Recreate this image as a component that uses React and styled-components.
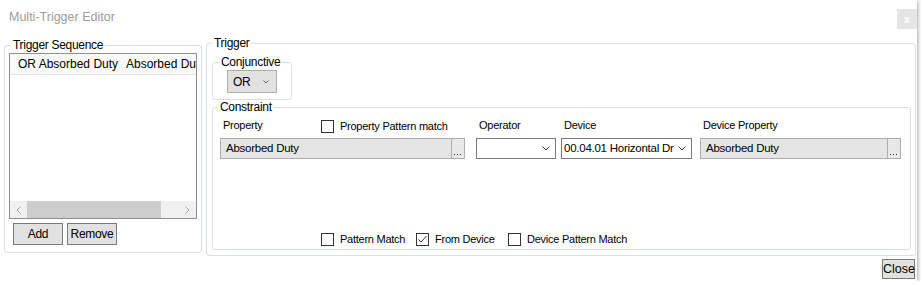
import React from 'react'
import styled, { createGlobalStyle } from 'styled-components'

const GlobalStyle = createGlobalStyle`
  body {
    margin: 0;
    background: #fff;
    font-family: "Liberation Sans", Arial, sans-serif;
    font-size: 11px;
    letter-spacing: -0.25px;
    color: #000;
  }
  * { box-sizing: border-box; }
`

const Window = styled.div`
  width: 917px;
  height: 281px;
  background: #fff;
  box-shadow: 1px 1px 4px rgba(0, 0, 0, 0.35);
  display: flex;
  flex-direction: column;
`

const TitleBar = styled.div`
  height: 36px;
  display: flex;
  justify-content: space-between;
  align-items: flex-start;
  padding-left: 9px;
`

const Title = styled.div`
  color: #9b9b9b;
  font-size: 12.5px;
  letter-spacing: 0;
  line-height: 20px;
  padding-top: 7px;
`

const CloseX = styled.div`
  width: 20px;
  height: 20px;
  margin-top: 9px;
  background: #e5e5e5;
  color: #fff;
  font-size: 11px;
  font-weight: bold;
  display: flex;
  align-items: center;
  justify-content: center;
`

const Body = styled.div`
  height: 220px;
  display: flex;
  align-items: flex-start;
  gap: 4px;
  padding-left: 4px;
`

const GroupBox = styled.fieldset`
  margin: ${p => p.$mt || 0}px 0 0 ${p => p.$ml || 0}px;
  padding: 0;
  border: 1px solid #d9dee3;
  border-radius: 3px;
  min-width: 0;
  width: ${p => p.$w}px;
  height: ${p => p.$h}px;
`

const Legend = styled.legend`
  padding: 0 2px;
  margin-left: ${p => p.$ml || 5}px;
  line-height: 14px;
  font-size: 12px;
  letter-spacing: -0.3px;
`

const ListView = styled.div`
  margin: 1px 0 0 4px;
  width: 188px;
  height: 166px;
  border: 1px solid #8e8f94;
  display: flex;
  flex-direction: column;
  background: #fff;
`

const ListHeader = styled.div`
  height: 21px;
  display: flex;
  align-items: center;
  background: #fafafa;
  border-bottom: 1px solid #e5e5e5;
  white-space: nowrap;
  overflow: hidden;
  font-size: 12px;
  letter-spacing: 0;
`

const HeaderCell = styled.div`
  flex: 0 0 ${p => p.$w}px;
  padding-left: ${p => p.$pl}px;
`

const ListRows = styled.div`
  flex: 1;
`

const HScroll = styled.div`
  height: 17px;
  display: flex;
  background: #f0f0f0;
`

const ScrollArrow = styled.div`
  flex: 0 0 17px;
  display: flex;
  align-items: center;
  justify-content: center;
`

const ScrollTrack = styled.div`
  flex: 1;
  display: flex;
`

const ScrollThumb = styled.div`
  width: 134px;
  background: #cdcdcd;
`

const ButtonRow = styled.div`
  display: flex;
  gap: 4px;
  margin: 4px 0 0 8px;
`

const Button = styled.button`
  width: ${p => p.$w || 50}px;
  height: ${p => p.$h || 22}px;
  padding: 0;
  background: #e1e1e1;
  border: 1px solid #7a7a7a;
  font-family: inherit;
  font-size: ${p => p.$fs || 12}px;
  letter-spacing: ${p => (p.$fs ? 0 : -0.3)}px;
  color: #000;
`

const ConjCombo = styled.div`
  margin: 1px 0 0 14px;
  width: 50px;
  height: 23px;
  background: #e1e1e1;
  border: 1px solid #adadad;
  display: flex;
  align-items: center;
  justify-content: space-between;
  padding: 0 7px 0 5px;
  font-size: 12px;
`

const ConstraintBody = styled.div`
  height: 135px;
  display: flex;
  flex-direction: column;
  padding-left: 7px;
`

const Columns = styled.div`
  display: flex;
`

const Column = styled.div`
  width: ${p => p.$w}px;
  margin-left: ${p => p.$ml || 0}px;
  display: flex;
  flex-direction: column;
`

const ColumnHead = styled.div`
  height: 24px;
  display: flex;
  align-items: flex-start;
  padding-top: 4px;
`

const FieldLabel = styled.div`
  line-height: 14px;
  padding-left: 3px;
  width: ${p => (p.$w ? `${p.$w}px` : 'auto')};
`

const CheckItem = styled.label`
  display: flex;
  align-items: center;
  gap: 6px;
  line-height: 14px;
  white-space: nowrap;
  width: ${p => (p.$w ? `${p.$w}px` : 'auto')};
  margin-top: ${p => p.$mt || 0}px;
`

const Box = styled.span`
  flex: 0 0 13px;
  height: 13px;
  border: 1px solid #333;
  background: #fff;
  display: flex;
  align-items: center;
  justify-content: center;
`

const PickField = styled.div`
  height: 21px;
  background: #e5e5e5;
  border: 1px solid #adadad;
  display: flex;
`

const PickText = styled.div`
  flex: 1;
  padding-left: 5px;
  line-height: 19px;
  white-space: nowrap;
  overflow: hidden;
  font-size: 11.5px;
`

const PickButton = styled.div`
  flex: 0 0 13px;
  border-left: 1px solid #adadad;
  background: #e8e8e8;
  display: flex;
  align-items: flex-end;
  justify-content: center;
  padding-bottom: 3px;
`

const Combo = styled.div`
  height: 21px;
  background: #fff;
  border: 1px solid #7a7a7a;
  display: flex;
  align-items: center;
  padding: 0 5px 0 2px;
`

const ComboText = styled.div`
  flex: 1;
  white-space: nowrap;
  overflow: hidden;
  line-height: 19px;
  margin-right: 4px;
  font-size: 11.5px;
`

const CheckRow = styled.div`
  margin: auto 0 3px 101px;
  display: flex;
`

const Footer = styled.div`
  display: flex;
  justify-content: flex-end;
  padding: 3px 2px 0 0;
`

const Chevron = ({ w = 8, h = 4, color = '#444' }) => (
  <svg width={w} height={h + 1} viewBox={`0 0 ${w} ${h + 1}`}>
    <polyline points={`0.5,0.5 ${w / 2},${h} ${w - 0.5},0.5`} fill="none" stroke={color} strokeWidth="1" />
  </svg>
)

const Dots = () => (
  <svg width="9" height="1" viewBox="0 0 9 1">
    <rect x="0" y="0" width="1" height="1" fill="#333" />
    <rect x="3" y="0" width="1" height="1" fill="#333" />
    <rect x="6" y="0" width="1" height="1" fill="#333" />
  </svg>
)

const SideArrow = ({ dir }) => (
  <svg width="5" height="8" viewBox="0 0 5 8">
    <polyline
      points={dir === 'left' ? '4.5,0.5 1,4 4.5,7.5' : '0.5,0.5 4,4 0.5,7.5'}
      fill="none"
      stroke="#a6a6a6"
      strokeWidth="1"
    />
  </svg>
)

const CheckBox = ({ checked, label, w, mt }) => (
  <CheckItem $w={w} $mt={mt}>
    <Box>
      {checked && (
        <svg width="11" height="11" viewBox="0 0 11 11">
          <polyline points="1.5,5.5 4,8 9.5,2" fill="none" stroke="#333" strokeWidth="1" />
        </svg>
      )}
    </Box>
    {label}
  </CheckItem>
)

export default function App() {
  return (
    <>
      <GlobalStyle />
      <Window>
        <TitleBar>
          <Title>Multi-Trigger Editor</Title>
          <CloseX>x</CloseX>
        </TitleBar>
        <Body>
          <GroupBox $w={198} $h={215} $mt={2}>
            <Legend $ml={6}>Trigger Sequence</Legend>
            <ListView>
              <ListHeader>
                <HeaderCell $w={116} $pl={8}>OR Absorbed Duty</HeaderCell>
                <HeaderCell $w={100} $pl={0}>Absorbed Duty</HeaderCell>
              </ListHeader>
              <ListRows />
              <HScroll>
                <ScrollArrow><SideArrow dir="left" /></ScrollArrow>
                <ScrollTrack><ScrollThumb /></ScrollTrack>
                <ScrollArrow><SideArrow dir="right" /></ScrollArrow>
              </HScroll>
            </ListView>
            <ButtonRow>
              <Button>Add</Button>
              <Button>Remove</Button>
            </ButtonRow>
          </GroupBox>

          <GroupBox $w={710} $h={220}>
            <Legend>Trigger</Legend>
            <GroupBox $w={80} $h={45} $mt={5} $ml={5}>
              <Legend $ml={6}>Conjunctive</Legend>
              <ConjCombo>
                OR
                <Chevron w={6} h={3} color="#666" />
              </ConjCombo>
            </GroupBox>
            <GroupBox $w={699} $h={150} $ml={5}>
              <Legend>Constraint</Legend>
              <ConstraintBody>
                <Columns>
                  <Column $w={245}>
                    <ColumnHead>
                      <FieldLabel $w={101}>Property</FieldLabel>
                      <CheckBox label="Property Pattern match" mt={1} />
                    </ColumnHead>
                    <PickField>
                      <PickText>Absorbed Duty</PickText>
                      <PickButton><Dots /></PickButton>
                    </PickField>
                  </Column>
                  <Column $w={80} $ml={11}>
                    <ColumnHead><FieldLabel>Operator</FieldLabel></ColumnHead>
                    <Combo>
                      <ComboText />
                      <Chevron />
                    </Combo>
                  </Column>
                  <Column $w={131} $ml={5}>
                    <ColumnHead><FieldLabel>Device</FieldLabel></ColumnHead>
                    <Combo>
                      <ComboText>00.04.01 Horizontal Drive</ComboText>
                      <Chevron />
                    </Combo>
                  </Column>
                  <Column $w={201} $ml={8}>
                    <ColumnHead><FieldLabel>Device Property</FieldLabel></ColumnHead>
                    <PickField>
                      <PickText>Absorbed Duty</PickText>
                      <PickButton><Dots /></PickButton>
                    </PickField>
                  </Column>
                </Columns>
                <CheckRow>
                  <CheckBox label="Pattern Match" w={95} />
                  <CheckBox label="From Device" w={92} checked />
                  <CheckBox label="Device Pattern Match" />
                </CheckRow>
              </ConstraintBody>
            </GroupBox>
          </GroupBox>
        </Body>
        <Footer>
          <Button $w={33} $h={20} $fs={12.5}>Close</Button>
        </Footer>
      </Window>
    </>
  )
}
